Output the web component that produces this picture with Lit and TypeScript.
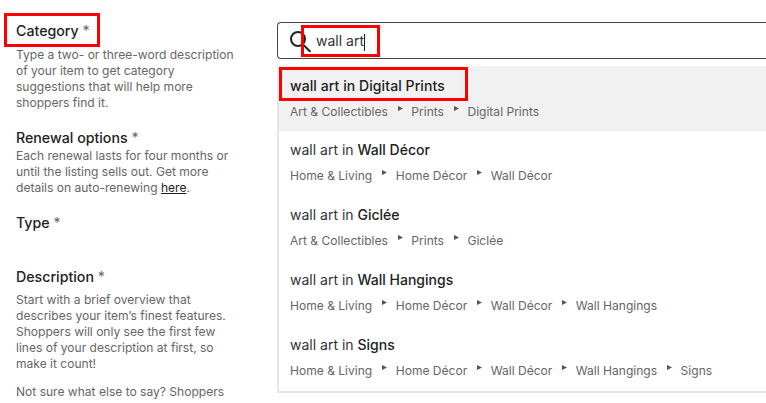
import { html, css, LitElement } from 'lit';
import { customElement } from 'lit/decorators.js';

const ROWS = [
  { name: 'Digital Prints', path: ['Art & Collectibles', 'Prints', 'Digital Prints'], active: true },
  { name: 'Wall Décor', path: ['Home & Living', 'Home Décor', 'Wall Décor'] },
  { name: 'Giclée', path: ['Art & Collectibles', 'Prints', 'Giclée'] },
  { name: 'Wall Hangings', path: ['Home & Living', 'Home Décor', 'Wall Décor', 'Wall Hangings'] },
  { name: 'Signs', path: ['Home & Living', 'Home Décor', 'Wall Décor', 'Wall Hangings', 'Signs'] },
];

@customElement('app-root')
export class AppRoot extends LitElement {
  static styles = css`
    :host {
      display: block;
      position: relative;
      width: 766px;
      height: 403px;
      overflow: hidden;
      background: #fff;
      font-family: Inter, 'Liberation Sans', sans-serif;
      color: #222;
    }

    .page {
      display: grid;
      grid-template-columns: 277px 489px;
      height: 403px;
    }

    .left {
      padding: 22px 0 0 16px;
    }

    .label {
      font-size: 14.2px;
      line-height: 18px;
      font-weight: 500;
      color: #222;
    }

    .label span {
      color: #666;
      font-weight: 400;
    }

    .help {
      width: 222px;
      font-size: 12.05px;
      line-height: 16px;
      color: #666;
      margin: 0;
    }

    .help a {
      color: #222;
      text-decoration: underline;
    }

    .help + .help {
      margin-top: 12px;
    }

    .category { margin-bottom: 7px; }
    .renewal { margin-top: 18px; margin-bottom: 1px; }
    .type { margin-top: 18px; }
    .desc { margin-top: 36px; margin-bottom: 6px; }

    .right {
      padding-top: 22px;
    }

    .search {
      display: flex;
      align-items: center;
      height: 37px;
      box-sizing: border-box;
      border: 1px solid #444;
      border-right: none;
      border-radius: 4px 0 0 4px;
      padding-left: 12px;
      gap: 5px;
      font-size: 14px;
      color: #333;
    }

    .search svg {
      margin-top: 2px;
    }

    .query {
      padding-top: 2px;
    }

    .caret {
      display: inline-block;
      width: 1px;
      height: 17px;
      background: #222;
      vertical-align: middle;
    }

    .menu {
      margin-top: 7px;
      border-left: 2px solid #e6e6e6;
      border-bottom: 2px solid #e6e6e6;
      height: 325px;
    }

    .row {
      height: 65px;
      padding: 10px 0 0 11px;
      box-sizing: border-box;
    }

    .row.active {
      background: #f1f1f1;
      padding-top: 11px;
    }

    .title {
      font-size: 14px;
      line-height: 18px;
      color: #333;
    }

    .title b {
      font-weight: 500;
      color: #222;
    }

    .row.active .title {
      font-weight: 500;
      letter-spacing: 0.08px;
      color: #222;
    }

    .crumbs {
      display: flex;
      margin-top: 8px;
      font-size: 12.05px;
      line-height: 18px;
      color: #666;
    }

    .crumbs svg {
      width: 5px;
      height: 5px;
      margin: 3px 8.5px 0 10px;
      fill: #555;
    }

    .mark {
      position: absolute;
      box-sizing: border-box;
      border: 3px solid #f00;
    }

    .m1 { left: 4px; top: 13px; width: 96px; height: 34px; }
    .m2 { left: 301px; top: 25px; width: 79px; height: 32px; }
    .m3 { left: 279px; top: 67px; width: 189px; height: 34px; }
  `;

  render() {
    return html`
      <div class="page">
        <div class="left">
          <div class="label category">Category <span>*</span></div>
          <p class="help">
            Type a two- or three-word description of your item to get category
            suggestions that will help more shoppers find it.
          </p>
          <div class="label renewal">Renewal options <span>*</span></div>
          <p class="help">
            Each renewal lasts for four months or until the listing sells out.
            Get more details on auto-renewing <a>here</a>.
          </p>
          <div class="label type">Type <span>*</span></div>
          <div class="label desc">Description <span>*</span></div>
          <p class="help">
            Start with a brief overview that describes your item’s finest
            features. Shoppers will only see the first few lines of your
            description at first, so make it count!
          </p>
          <p class="help">Not sure what else to say? Shoppers</p>
        </div>
        <div class="right">
          <div class="search">
            <svg width="21" height="21" viewBox="0 0 21 21" fill="none" stroke="#222" stroke-width="2">
              <circle cx="8" cy="8" r="7"></circle>
              <path d="M13 13.5 L20.5 21"></path>
            </svg>
            <span class="query">wall art<i class="caret"></i></span>
          </div>
          <div class="menu">
            ${ROWS.map(
              (row) => html`
                <div class="row ${row.active ? 'active' : ''}">
                  <div class="title">wall art in <b>${row.name}</b></div>
                  <div class="crumbs">
                    ${row.path.map(
                      (part, i) => html`
                        ${i > 0
                          ? html`<svg viewBox="0 0 5 5"><path d="M0 0 L5 2.5 L0 5 Z"></path></svg>`
                          : ''}<span>${part}</span>
                      `
                    )}
                  </div>
                </div>
              `
            )}
          </div>
        </div>
      </div>
      <div class="mark m1"></div>
      <div class="mark m2"></div>
      <div class="mark m3"></div>
    `;
  }
}

declare global {
  interface HTMLElementTagNameMap {
    'app-root': AppRoot;
  }
}
